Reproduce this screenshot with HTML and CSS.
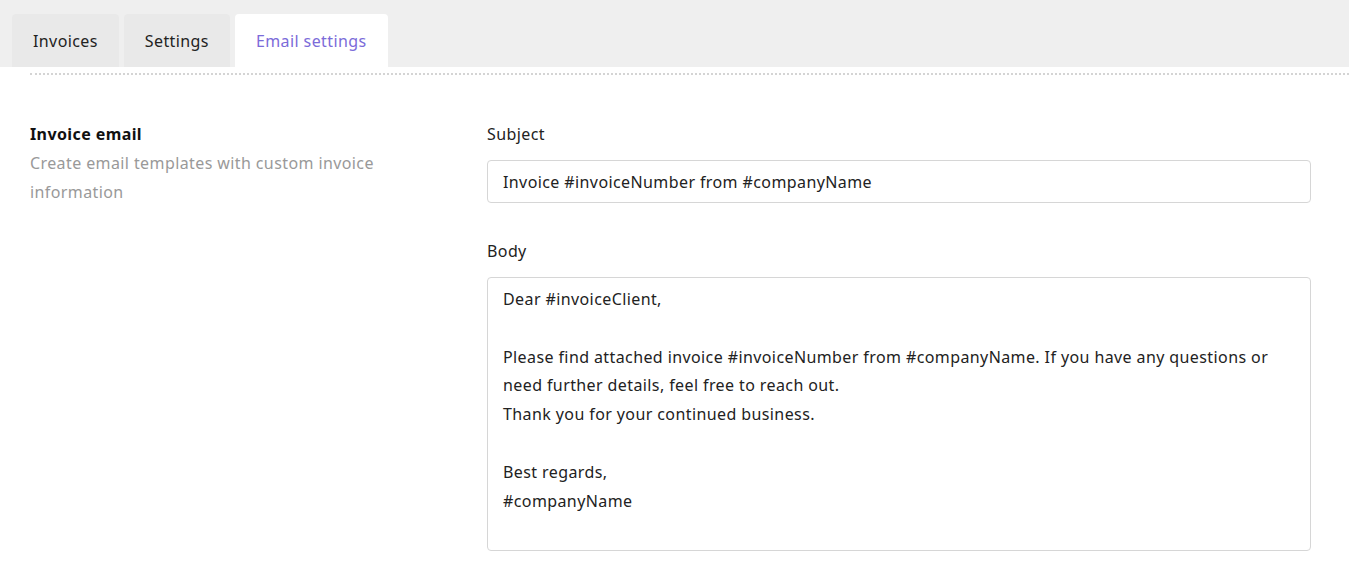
FILE: index.html
```html
<!DOCTYPE html>
<html lang="en">
<head>
    <meta charset="UTF-8">
    <meta name="viewport" content="width=device-width, initial-scale=1.0">
    <title>Email settings</title>
    <link rel="stylesheet" href="styles.css">
</head>
<body>
    <div class="tabs">
        <a class="tab" href="#">Invoices</a>
        <a class="tab" href="#">Settings</a>
        <a class="tab active" href="#">Email settings</a>
    </div>

    <div class="panel">
        <div class="divider"></div>

        <div class="section">
            <div class="section-info">
                <h3>Invoice email</h3>
                <p>Create email templates with custom invoice information</p>
            </div>

            <div class="section-form">
                <label for="subject">Subject</label>
                <input type="text" id="subject" value="Invoice #invoiceNumber from #companyName">

                <label for="body">Body</label>
                <textarea id="body">Dear #invoiceClient,

Please find attached invoice #invoiceNumber from #companyName. If you have any questions or need further details, feel free to reach out.
Thank you for your continued business.

Best regards,
#companyName</textarea>
            </div>
        </div>
    </div>
</body>
</html>
```

FILE: styles.css
```css
body {
    font-family: 'Noto Sans', 'Open Sans', sans-serif;
    font-size: 16px;
    letter-spacing: 0.4px;
    margin: 0;
    background-color: #fff;
    color: #222;
}
.tabs {
    display: flex;
    gap: 5px;
    align-items: flex-end;
    height: 67px;
    padding-left: 12px;
    background-color: #efefef;
    box-sizing: border-box;
}
.tab {
    display: flex;
    align-items: center;
    height: 53px;
    padding: 0 21px;
    background-color: #e9e9e9;
    border-radius: 4px 4px 0 0;
    color: #222;
    text-decoration: none;
    box-sizing: border-box;
}
.tab.active {
    background-color: #fff;
    color: #7b6bd9;
}
.panel {
    padding-left: 30px;
}
.divider {
    margin-top: 6px;
    border-top: 2px dotted #d4d4d4;
}
.section {
    display: grid;
    grid-template-columns: 1fr 2fr;
    padding: 48px 38px 0 0;
}
.section-info h3 {
    margin: 0 0 4px;
    font-size: 16px;
    font-weight: bold;
    color: #111;
    line-height: 22px;
}
.section-info p {
    margin: 0;
    line-height: 29px;
    color: #999;
    max-width: 370px;
}
.section-form {
    padding-left: 30px;
}
label {
    display: block;
    margin-bottom: 15px;
    line-height: 22px;
}
input, textarea {
    display: block;
    width: 100%;
    box-sizing: border-box;
    border: 1px solid #d6d6d6;
    border-radius: 4px;
    font-family: inherit;
    font-size: 16px;
    letter-spacing: inherit;
    color: #222;
    padding: 0 15px;
}
input {
    height: 43px;
    margin-bottom: 37px;
}
textarea {
    height: 274px;
    padding-top: 7px;
    line-height: 28.8px;
    resize: none;
}
```
